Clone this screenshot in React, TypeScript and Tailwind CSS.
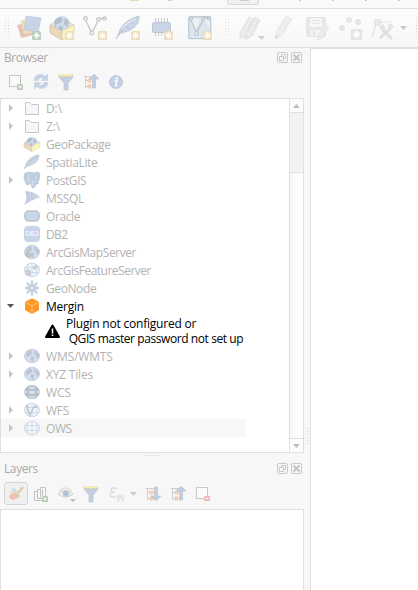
import type { ReactNode } from "react";

type IconProps = { children: ReactNode; className?: string; size?: number };

function Svg({ children, className = "", size = 24 }: IconProps) {
  return (
    <svg width={size} height={size} viewBox={`0 0 ${size} ${size}`} fill="none" className={`block shrink-0 overflow-visible ${className}`}>
      {children}
    </svg>
  );
}

function NewBadge({ x = 15, y = 15 }: { x?: number; y?: number }) {
  return (
    <g transform={`translate(${x} ${y})`}>
      <rect width="9" height="9" rx="1.500" fill="#ebdcbc" />
      <path d="M4.500 1v7M1 4.500h7M2 2l5 5M7 2l-5 5" stroke="#fffdf7" strokeWidth="1.100" />
    </g>
  );
}

function Caret({ className = "", color = "#c9c9c9" }: { className?: string; color?: string }) {
  return (
    <svg width="7" height="4" viewBox="0 0 7 4" className={`block shrink-0 ${className}`}>
      <path d="M0 0h7L3.500 4z" fill={color} />
    </svg>
  );
}

function Grip() {
  return (
    <svg width="4" height="18" viewBox="0 0 4 18" className="block shrink-0" fill="#dadada">
      {[0, 3, 6, 9, 12, 15].map((y) => (
        <g key={y}>
          <rect x="0" y={y} width="1" height="1" />
          <rect x="3" y={y} width="1" height="1" />
        </g>
      ))}
    </svg>
  );
}

/* ---------- main toolbar icons ---------- */

function DataSourceIcon() {
  return (
    <Svg>
      <path d="M0 9l11-3 5 13-12 3z" fill="#e6c2bb" />
      <path d="M4 5l12-2 1 14-10 1z" fill="#f0dfb6" stroke="#e6d3a8" strokeWidth=".6" />
      <path d="M9 0l15 2-3 14-14-2z" fill="#c8d4e6" stroke="#c0cad8" strokeWidth=".8" />
      <rect x="15" y="15" width="9" height="9" rx="1.500" fill="#bdcfbc" />
      <path d="M19.500 16.500v6M16.500 19.500h6" stroke="#fff" strokeWidth="2" />
    </Svg>
  );
}

function PackageArt() {
  return (
    <>
      <path d="M0 9l12-8 12 8-12 6z" fill="#e6e5df" stroke="#d0cdc0" strokeWidth=".6" />
      <circle cx="12" cy="8" r="8" fill="#cfdbec" />
      <path d="M6 3l4-2 3 2-2 4-4 1-2 3-1-5zM15 2l4 4-2 5-3-3zM9 10l4 1-1 4-3-1z" fill="#b4bfcc" />
      <path d="M0 9l12 6v9L0 17z" fill="#ecd9bd" stroke="#cfc2ac" strokeWidth=".8" />
      <path d="M12 15l12-6v8l-12 7z" fill="#fbf8bc" stroke="#d6cfa8" strokeWidth=".8" />
    </>
  );
}

function PackageIcon() {
  return (
    <Svg>
      <PackageArt />
      <NewBadge />
    </Svg>
  );
}

function VectorArt() {
  return (
    <g stroke="#c3c6c9" strokeWidth="1.300">
      <path d="M3 4.500l5 11M9.500 15.500l5-9.500M17 2.500h4" />
      <circle cx="2.500" cy="2.500" r="1.800" fill="#f9f9f9" />
      <circle cx="8.700" cy="17" r="1.800" fill="#f9f9f9" />
      <circle cx="15.500" cy="3.500" r="1.800" fill="#f9f9f9" />
      <circle cx="21.500" cy="2.500" r="1.500" fill="#f9f9f9" />
    </g>
  );
}

function FeatherArt() {
  return (
    <>
      <path d="M2 20C4 9 12 3 23 0c1 7-5 15-18 17z" fill="#cad6e7" stroke="#bec8d5" strokeWidth=".9" />
      <path d="M0 23C5 14 11 8 21 2M6 13l1 3M10 9l3 4M14 5l4 3" stroke="#bac4d0" strokeWidth="1" />
      <path d="M6 13c4-5 8-8 14-10" stroke="#edf2f8" strokeWidth="1.200" />
    </>
  );
}

function ChipIcon() {
  return (
    <Svg>
      <path d="M6.500 2v18M9.500 2v18M12.500 2v18M15.500 2v18M18.500 2v16" stroke="#c8cacc" />
      <rect x="3.500" y="6.500" width="18" height="10" rx="1.500" fill="#c9d5e7" stroke="#bcc7d5" />
      <NewBadge x={15} y={15} />
    </Svg>
  );
}

function VirtualLayerIcon() {
  return (
    <Svg>
      <rect x=".7" y=".7" width="22" height="22" rx="1.500" fill="#dde6ee" stroke="#bfcad6" strokeWidth="1.300" />
      <path d="M2 3l5 13 5-13zM15 2h7v9z" fill="#edf1f5" />
      <g stroke="#c0c5cb" strokeWidth="1.300">
        <path d="M3 4l5 12M9 16l6-12M15 2h5" />
        <circle cx="3" cy="2.500" r="1.500" fill="#f1f4f6" />
        <circle cx="8.500" cy="17.500" r="1.800" fill="#f9f9f9" />
        <circle cx="15" cy="3" r="1.500" fill="#f1f4f6" />
        <circle cx="20.500" cy="2.500" r="1.300" fill="#f1f4f6" />
      </g>
      <NewBadge />
    </Svg>
  );
}

function PencilArt() {
  return (
    <>
      <path d="M12 0l6 3-9 15-7 5-1-1 2-7z" fill="#ebebe8" stroke="#e4e4e2" strokeWidth=".7" />
      <path d="M14 2L6 17M3 15l6 3" stroke="#f4f4f2" strokeWidth="1.200" />
      <path d="M1 23l1-4 3 2z" fill="#dcdcdc" />
    </>
  );
}

function EditsIcon() {
  return (
    <Svg>
      <g transform="translate(0 1)">
        <path d="M10 0l5 2-8 17-6 3 0-7z" fill="#eae8e8" stroke="#e3e1e1" strokeWidth=".7" />
        <path d="M12 1L4 18" stroke="#f5f3f3" />
      </g>
      <g transform="translate(5 1)">
        <path d="M11 0l5 3-8 16-7 4 0-8z" fill="#e9e6e6" stroke="#e1dfdf" strokeWidth=".7" />
        <path d="M13 2L5 18M1 15l6 4" stroke="#f5f3f3" />
      </g>
    </Svg>
  );
}

function SaveEditsIcon() {
  return (
    <Svg>
      <rect x=".5" y="1.500" width="19" height="19" rx="2" fill="#e8e8e8" stroke="#e2e2e2" />
      <path d="M4 2h12v9H4z" fill="#f6f6f6" />
      <path d="M6 4.500h8M6 7.500h8" stroke="#e5e5e5" />
      <path d="M5 14h10v6H5z" fill="#f6f6f6" />
      <path d="M7 15h2v4H7z" fill="#e0e0e0" />
      <path d="M19 9l4 2-7 11-5 2 1-5z" fill="#ebebe8" stroke="#e1e1df" strokeWidth=".6" />
    </Svg>
  );
}

function PointsIcon() {
  return (
    <Svg>
      <g fill="#e8e8e8" stroke="#e0e0e0">
        <circle cx="4" cy="12" r="2.500" />
        <circle cx="11" cy="4" r="2.500" />
        <circle cx="20" cy="6" r="2.500" />
      </g>
      <rect x="13" y="13" width="11" height="11" rx="1.500" fill="#e4e4e0" />
      <path d="M18.500 14.500v8M14.500 18.500h8M16 16l5 5M21 16l-5 5" stroke="#fff" strokeWidth="1.200" />
    </Svg>
  );
}

function VertexToolIcon() {
  return (
    <Svg>
      <path d="M5 8L1 21M8 6h12" stroke="#e2e2e2" strokeWidth="1.200" />
      <rect x="4" y="4" width="5" height="5" stroke="#d4d4d4" />
      <circle cx="6.500" cy="6.500" r="1" fill="#d4d4d4" />
      <path d="M9 22l11-10M10 12l11 11" stroke="#e0e0dc" strokeWidth="3" />
      <path d="M8 11l4-3 3 5-3 2z" fill="#e2e2e2" />
      <path d="M17 9c0 3 1 4 4 4l2-2-3-4z" fill="#e6e6e2" />
    </Svg>
  );
}

/* ---------- small panel icons ---------- */

function AddLayerIcon() {
  return (
    <Svg size={16}>
      <rect x="1.500" y="1.500" width="11" height="11" fill="#f9f9f9" stroke="#c5c8c2" />
      <rect x="9" y="10" width="6" height="6" rx="1" fill="#bbcbb9" />
      <path d="M12 11.500v3M10.500 13h3" stroke="#fff" />
    </Svg>
  );
}

function RefreshIcon() {
  return (
    <Svg size={16}>
      <path d="M1 6.500C1.500 0 9-1 12 2.500L14.500 0v6.500H8.500l2-2C8.500 3 6 3.500 5 6.500zM15 8.500C14.500 15 7 16 4 12.500L1.500 15V8.500H8l-2.300 2.200c2 1.500 4.300 1 5.300-2.200z" fill="#c5d2e6" stroke="#bccadd" strokeWidth=".5" />
    </Svg>
  );
}

function FilterIcon() {
  return (
    <Svg size={16}>
      <path d="M1 1h14v2l-5 6v7H6V9L1 3z" fill="#c3cfe0" stroke="#bdc7d4" strokeWidth=".7" />
      <path d="M1.500 1.500h13" stroke="#f9efa6" strokeWidth="2" />
      <path d="M1 3h14" stroke="#c5c9c4" strokeWidth=".7" />
    </Svg>
  );
}

function TreeArrowIcon({ down = false }: { down?: boolean }) {
  return (
    <Svg size={16}>
      <path d="M1 2.500h9M2.500 2v12M2 6.500h5M2 12.500h5" stroke="#cfcfcf" />
      <path d="M5 5h3v3H5zM5 11h3v3H5z" fill="#f9d9c2" stroke="#f3c6a6" />
      {down ? (
        <path d="M9.500 1h3v9H16l-5 5-5-5h3.500z" fill="#c1cee1" stroke="#bac6d7" strokeWidth=".7" />
      ) : (
        <path d="M9.500 14h3V5H16l-5-5-5 5h3.500z" fill="#c1cee1" stroke="#bac6d7" strokeWidth=".7" />
      )}
    </Svg>
  );
}

function InfoIcon() {
  return (
    <Svg size={16}>
      <circle cx="8" cy="8" r="6.600" fill="#c2d0e5" stroke="#bac7da" strokeWidth=".7" />
      <circle cx="8.800" cy="4.500" r="1.200" fill="#fff" />
      <path d="M6.500 7H9l-1.300 4.500h1.500" stroke="#fff" strokeWidth="1.400" />
    </Svg>
  );
}

function StyleIcon() {
  return (
    <Svg size={16}>
      <path d="M1 6l5-3 5 3-1 6-5-1z" fill="#f8e6a8" />
      <path d="M3 3l4-1 2 4-4 1z" fill="#ceddec" />
      <path d="M1 10l4-3 4 4-3 3-4-1z" fill="#f0bdb4" />
      <path d="M15 1L10 7" stroke="#dcc5b1" strokeWidth="2" />
      <path d="M8 6l4 4-3 3-5-4z" fill="#e2c9b5" />
    </Svg>
  );
}

function AddGroupIcon() {
  return (
    <Svg size={16}>
      <path d="M5 5.500H1.500v9H9M8 3.500H4.500v9H9M7.500 11.500v-10h5v9" stroke="#c1c3bf" />
      <path d="M9.500 3v7" stroke="#c1c3bf" />
      <rect x="9" y="10" width="6" height="6" rx="1" fill="#bbcbb9" />
      <path d="M12 11.500v3M10.500 13h3" stroke="#fff" />
    </Svg>
  );
}

function EyeIcon() {
  return (
    <Svg size={16}>
      <path d="M0 8c4-5 10-5 15 0-5 4-10 4-15 0z" fill="#eeeeec" stroke="#cdcdc9" strokeWidth=".9" />
      <path d="M1 5c4-4 9-4 13 0" stroke="#dad7d0" />
      <circle cx="8" cy="7.500" r="3.300" fill="#bdcbe0" />
      <circle cx="8" cy="7.500" r="1.200" fill="#a4b1c0" />
      <path d="M12 13h6l-3 3z" fill="#bdbdbd" />
    </Svg>
  );
}

function ExpressionIcon() {
  return (
    <Svg size={16}>
      <path d="M8 3C6 1 2 2 2 4s2 2 4 2C3 6 1 7 1 9s4 3 6 1" stroke="#dedede" strokeWidth="1.600" />
      <path d="M8 15.500v-5q0-2 2-2h3q2 0 2 2v5h-2.500V12h-2v3.500z" fill="#e5e5e5" />
    </Svg>
  );
}

function RemoveLayerIcon() {
  return (
    <Svg size={16}>
      <rect x="1.500" y="1.500" width="11" height="11" fill="#fafafa" stroke="#c8c8c4" />
      <rect x="9" y="10" width="6" height="5" rx="1" fill="#f1b9bc" />
      <path d="M10.500 12.500h3" stroke="#fff" />
    </Svg>
  );
}

/* ---------- tree icons ---------- */

type GlobeKind = "map" | "grid" | "dark" | "vector" | "arc" | "feature";

function GlobeIcon({ kind }: { kind: GlobeKind }) {
  const light = kind === "grid" || kind === "vector" || kind === "feature";
  return (
    <Svg size={16}>
      <ellipse cx="8" cy="8" rx="7.500" ry="6.800" fill={light ? "#f3f7fc" : kind === "dark" ? "#c2c8d1" : "#d3dfee"} stroke={light ? "#c6d5e9" : "#c2cddb"} strokeWidth=".9" />
      {(kind === "map" || kind === "arc") && (
        <>
          <path d="M2 5l4-3 2 2-1 3-3 1-1 2zM7 8l3 1-1 5-2-2zM10 3l4 1 1 4-2 3-1-4-2-1z" fill="#b9c3cf" />
          <path d="M4 5h2M11 5h3" stroke="#dfe6ee" strokeWidth=".6" />
        </>
      )}
      {kind === "arc" && <path d="M1 9l3-2 4 5-3 2-4-2z" fill="#bfc1c3" />}
      {kind === "feature" && <path d="M1 9l3-2 3 2v4l-3 1-3-2zM8 6l3-3 3 1-3 4z" fill="#c4c7cb" />}
      {light && (
        <path d="M1 5.500h14M1 10.500h14M8 1v14M4.500 2c-2 4-2 8 0 12M11.500 2c2 4 2 8 0 12" stroke="#c9d7ea" strokeWidth=".9" />
      )}
      {kind === "dark" && (
        <>
          <path d="M1 5.500h14M1 10.500h14M5 2c-2 4-2 8 0 12M11 2c2 4 2 8 0 12" stroke="#b2bac4" />
          <path d="M5 3h6v2H5zM5 7h6v3H5zM5 12h6v1H5zM1 7h2v2H1zM13 7h2v2h-2z" fill="#d0deef" />
        </>
      )}
      {kind === "vector" && (
        <>
          <path d="M3 4l3 9 4-8h3" stroke="#c0c3c7" strokeWidth="1.400" />
          <circle cx="3" cy="4" r="1.200" fill="#c0c3c7" />
          <circle cx="11" cy="4.500" r="1.200" fill="#c0c3c7" />
        </>
      )}
    </Svg>
  );
}

const FolderIcon = () => (
  <Svg size={16}>
    <path d="M1.500 14.500v-12h4l2 2h7v10z" fill="#f7f7f7" stroke="#c9c9c9" />
  </Svg>
);

const GeoPackageIcon = () => (
  <Svg size={16}>
    <g transform="translate(0 1) scale(.66 .61)"><PackageArt /></g>
  </Svg>
);

const SpatiaLiteIcon = () => (
  <Svg size={16}>
    <path d="M1 14C2 7 7 2 15 1c0 5-4 10-12 11z" fill="#cad6e7" stroke="#bdc8d6" strokeWidth=".8" />
    <path d="M0 15C4 9 8 5 14 2" stroke="#b8c3cf" />
  </Svg>
);

const PostgisIcon = () => (
  <Svg size={16}>
    <path d="M1 1l5-1 3 1 5-1 2 2-1 6-2 3h2l-3 1-1 3-3 1-1-5-3 2-2-1L0 6z" fill="#c0cdde" stroke="#b5c1d0" strokeWidth=".7" />
    <path d="M5 1L4 7l2 3M10 1l2 4-1 5-3-1M8 9l1 5" stroke="#dbe3ee" strokeWidth=".8" />
  </Svg>
);

const MssqlIcon = () => (
  <Svg size={16}>
    <path d="M1 1c6 0 11 2 15 6-5 2-10 4-16 8 3-5 3-9 1-14z" fill="#c0cddf" />
    <path d="M5 2c2 4 2 7 0 11M9 3c2 3 2 6 0 8M12 5c1 2 1 3 0 4" stroke="#dce4ee" strokeWidth=".8" />
  </Svg>
);

const OracleIcon = () => (
  <Svg size={16}>
    <rect x=".9" y="3" width="14.200" height="10" rx="4" fill="#c9d6e8" stroke="#bec2c9" strokeWidth="1.600" />
  </Svg>
);

const Db2Icon = () => (
  <div className="flex size-4 shrink-0 items-center justify-center rounded-sm bg-[#c7d5e9] font-['DejaVu_Sans',sans-serif] text-[6.500px] leading-none text-white">DB2</div>
);

const GeoNodeIcon = () => (
  <Svg size={16}>
    <path d="M8 1.500v13M2 8h12M3.500 3.500l9 9M12.500 3.500l-9 9" stroke="#c3cedc" strokeWidth="2.400" strokeLinecap="round" />
    <circle cx="8" cy="8" r="1.300" fill="#e3e9f0" />
  </Svg>
);

const MerginIcon = () => (
  <Svg size={16}>
    <path d="M8 .2l7 3.500v8.200l-7 4-7-4V3.700z" fill="#fb9826" />
    <path d="M1 4l7 3.700L15 4M8 7.700V16" stroke="#ffc987" strokeWidth=".8" />
  </Svg>
);

type Row = { label: string; icon: ReactNode; expandable?: boolean; tracking: string };

const upperRows: Row[] = [
  { label: "D:\\", icon: <FolderIcon />, expandable: true, tracking: "tracking-[-0.1px]" },
  { label: "Z:\\", icon: <FolderIcon />, expandable: true, tracking: "tracking-[-0.1px]" },
  { label: "GeoPackage", icon: <GeoPackageIcon />, tracking: "tracking-[-0.4px]" },
  { label: "SpatiaLite", icon: <SpatiaLiteIcon />, tracking: "tracking-[-0.35px]" },
  { label: "PostGIS", icon: <PostgisIcon />, expandable: true, tracking: "tracking-[-0.4px]" },
  { label: "MSSQL", icon: <MssqlIcon />, tracking: "tracking-[-0.3px]" },
  { label: "Oracle", icon: <OracleIcon />, tracking: "tracking-[-0.4px]" },
  { label: "DB2", icon: <Db2Icon />, tracking: "tracking-[-0.6px]" },
  { label: "ArcGisMapServer", icon: <GlobeIcon kind="arc" />, tracking: "tracking-[-0.42px]" },
  { label: "ArcGisFeatureServer", icon: <GlobeIcon kind="feature" />, tracking: "tracking-[-0.5px]" },
  { label: "GeoNode", icon: <GeoNodeIcon />, tracking: "tracking-[-0.4px]" },
];

const lowerRows: Row[] = [
  { label: "WMS/WMTS", icon: <GlobeIcon kind="map" />, expandable: true, tracking: "tracking-[-0.15px]" },
  { label: "XYZ Tiles", icon: <GlobeIcon kind="map" />, expandable: true, tracking: "tracking-[-0.2px]" },
  { label: "WCS", icon: <GlobeIcon kind="dark" />, tracking: "tracking-[-0.2px]" },
  { label: "WFS", icon: <GlobeIcon kind="vector" />, expandable: true, tracking: "tracking-[-0.3px]" },
  { label: "OWS", icon: <GlobeIcon kind="grid" />, expandable: true, tracking: "tracking-[-0.4px]" },
];

function TreeRow({ row, selected = false }: { row: Row; selected?: boolean }) {
  return (
    <div className={`flex h-[18px] w-[245px] shrink-0 items-center pl-[7px] ${selected ? "bg-[#f7f7f7]" : ""}`}>
      <svg width="6" height="8" viewBox="0 0 6 8" className="mr-[10px] block shrink-0">
        {row.expandable && <path d="M1 0v8l4-4z" fill="#c5c5c5" />}
      </svg>
      {row.icon}
      <span className={`mt-[2px] ml-[6px] whitespace-nowrap leading-4 text-[#b3b3b3] ${row.tracking}`}>{row.label}</span>
    </div>
  );
}

function DockButtons() {
  return (
    <div className="flex gap-[3px]">
      <Svg size={11}>
        <rect x=".5" y=".5" width="10" height="10" rx="1.500" stroke="#c9c9c9" />
        <path d="M4.500 4V2.500h4v4H7" stroke="#c9c9c9" />
        <rect x="2.500" y="4.500" width="4" height="4" stroke="#c9c9c9" />
      </Svg>
      <Svg size={11}>
        <rect x=".5" y=".5" width="10" height="10" rx="1.500" stroke="#c9c9c9" />
        <path d="M2.500 2.500l6 6M8.500 2.500l-6 6" stroke="#c2c2c2" strokeWidth="1.800" />
      </Svg>
    </div>
  );
}

function DockTitle({ children }: { children: ReactNode }) {
  return (
    <div className="flex h-[19px] shrink-0 items-center justify-between pr-[2px] pl-1 text-[#a9a9a9]">
      <span className="mt-px tracking-[-0.4px]">{children}</span>
      <DockButtons />
    </div>
  );
}

function ScrollBar() {
  return (
    <div className="flex w-[14px] shrink-0 flex-col border-l border-[#dfdfdf] bg-linear-to-r from-[#f8f8f8] to-white">
      <div className="flex h-[14px] shrink-0 items-center justify-center border-b border-[#dfdfdf] bg-[#fdfdfd]">
        <Caret className="rotate-180" color="#bfbfbf" />
      </div>
      <div className="h-[60px] shrink-0 border-b border-[#dfdfdf] bg-[#f2f2f2]" />
      <div className="flex-1" />
      <div className="flex h-[14px] shrink-0 items-center justify-center border-t border-[#dfdfdf] bg-[#fdfdfd]">
        <Caret color="#bfbfbf" />
      </div>
    </div>
  );
}

function TopStrip() {
  return (
    <div className="h-[9px] shrink-0 border-b border-[#dfdfdf] bg-[#f9f9f9]">
      <svg width="418" height="8" viewBox="0 0 418 8" className="block">
        <rect x="130" y="0" width="9" height="1" fill="#e8d9b8" />
        <rect x="168" y="0" width="4" height="1" fill="#cfcfcf" />
        <path d="M227.500 0v2.500q0 2 2 2h27q2 0 2-2V0" fill="#f0f0f0" stroke="#d7d7d7" />
        <rect x="240" y="0" width="9" height="1" fill="#d0d0d0" />
        {[299, 332, 365, 398].map((x) => (
          <rect key={x} x={x} y="0" width="1.500" height="1" fill="#b8b8b8" />
        ))}
      </svg>
    </div>
  );
}

function Toolbar() {
  return (
    <div className="flex h-[39px] shrink-0 items-center overflow-hidden border-b border-[#dfdfdf] bg-linear-to-b from-[#fdfdfd] to-[#f7f7f7] pl-[5px]">
      <Grip />
      <div className="ml-2 flex gap-[9px]">
        <DataSourceIcon />
        <PackageIcon />
        <Svg><VectorArt /><NewBadge /></Svg>
        <Svg><FeatherArt /><NewBadge /></Svg>
        <ChipIcon />
      </div>
      <div className="ml-2 h-[18px] w-px bg-[#e0e0e0]" />
      <div className="ml-[7px]"><VirtualLayerIcon /></div>
      <div className="ml-[13px]"><Grip /></div>
      <div className="ml-[10px]"><EditsIcon /></div>
      <Caret className="mt-[20px] -ml-[5px]" color="#d0d0d0" />
      <div className="ml-[9px] flex gap-[8px]">
        <Svg><PencilArt /></Svg>
        <SaveEditsIcon />
        <PointsIcon />
        <div className="ml-px"><VertexToolIcon /></div>
      </div>
      <Caret className="ml-[5px]" />
      <div className="ml-[9px]"><Grip /></div>
    </div>
  );
}

export default function App() {
  return (
    <div className="flex h-[590px] w-[418px] flex-col overflow-hidden bg-[#f7f7f7] font-['Open_Sans','Noto_Sans',sans-serif] text-[12px] leading-4">
      <TopStrip />
      <Toolbar />
      <div className="flex min-h-0 flex-1">
        <div className="flex w-[304px] shrink-0 flex-col">
          <DockTitle>Browser</DockTitle>
          <div className="flex h-[31px] shrink-0 items-center gap-[9px] pb-px pl-2">
            <AddLayerIcon />
            <RefreshIcon />
            <FilterIcon />
            <TreeArrowIcon />
            <InfoIcon />
          </div>
          <div className="flex h-[355px] shrink-0 border border-[#dfdfdf] bg-white">
            <div className="min-w-0 flex-1">
              {upperRows.map((row) => <TreeRow key={row.label} row={row} />)}
              <div className="flex h-[18px] items-center pl-[6px] text-black">
                <Caret color="#555555" className="mr-[10px]" />
                <MerginIcon />
                <span className="mt-[2px] ml-[6px] tracking-[-0.25px]">Mergin</span>
              </div>
              <div className="flex h-8 items-center pl-[44px] text-black">
                <Svg size={16}>
                  <path d="M7.500 2.500L14 14H1z" fill="#000" stroke="#000" strokeWidth="2" strokeLinejoin="round" />
                  <path d="M7.500 5.500v5M7.500 11.500v1.500" stroke="#fff" strokeWidth="1.500" />
                </Svg>
                <div className="ml-[5px] whitespace-pre leading-[15px]">
                  <div className="tracking-[-0.2px]">Plugin not configured or</div>
                  <div className="tracking-[-0.42px]"> QGIS master password not set up</div>
                </div>
              </div>
              {lowerRows.map((row) => <TreeRow key={row.label} row={row} selected={row.label === "OWS"} />)}
            </div>
            <ScrollBar />
          </div>
          <div className="flex h-[7px] shrink-0 justify-center gap-[2px] pt-[2px]">
            {[0, 1, 2, 3, 4, 5].map((i) => <i key={i} className="size-px bg-[#d0d0d0]" />)}
          </div>
          <div className="-mt-px"><DockTitle>Layers</DockTitle></div>
          <div className="flex h-[31px] shrink-0 items-center pl-1">
            <div className="flex h-[23px] w-6 shrink-0 items-center justify-center rounded-[3px] border border-[#d5d5d5] bg-[#f0f0f0]">
              <StyleIcon />
            </div>
            <div className="ml-[5px] flex items-center gap-[9px]">
              <AddGroupIcon />
              <EyeIcon />
              <FilterIcon />
            </div>
            <div className="ml-[10px]"><ExpressionIcon /></div>
            <Caret className="ml-[5px]" />
            <div className="ml-[8px] flex gap-[9px]">
              <TreeArrowIcon down />
              <TreeArrowIcon />
              <RemoveLayerIcon />
            </div>
          </div>
          <div className="flex-1 border border-b-0 border-[#dfdfdf] bg-white" />
        </div>
        <div className="flex w-[6px] shrink-0 flex-col items-center gap-[2px] pt-[380px]">
          {[0, 1, 2, 3, 4, 5].map((i) => <i key={i} className="size-px shrink-0 bg-[#d0d0d0]" />)}
        </div>
        <div className="flex-1 border-t border-l border-[#dfdfdf] bg-white" />
      </div>
    </div>
  );
}
